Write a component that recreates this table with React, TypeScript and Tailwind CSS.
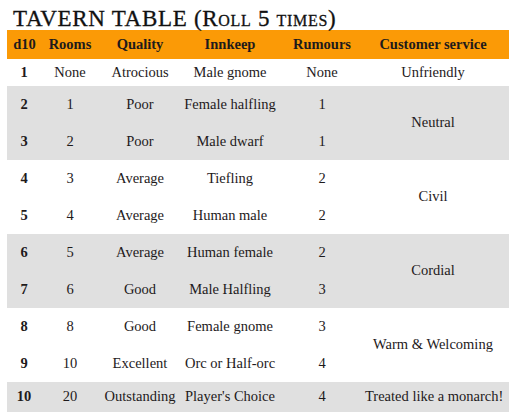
import React from "react";

type Row = { d: string; rooms: string; quality: string; innkeep: string; rumours: string };

const rows: Row[] = [
  { d: "1", rooms: "None", quality: "Atrocious", innkeep: "Male gnome", rumours: "None" },
  { d: "2", rooms: "1", quality: "Poor", innkeep: "Female halfling", rumours: "1" },
  { d: "3", rooms: "2", quality: "Poor", innkeep: "Male dwarf", rumours: "1" },
  { d: "4", rooms: "3", quality: "Average", innkeep: "Tiefling", rumours: "2" },
  { d: "5", rooms: "4", quality: "Average", innkeep: "Human male", rumours: "2" },
  { d: "6", rooms: "5", quality: "Average", innkeep: "Human female", rumours: "2" },
  { d: "7", rooms: "6", quality: "Good", innkeep: "Male Halfling", rumours: "3" },
  { d: "8", rooms: "8", quality: "Good", innkeep: "Female gnome", rumours: "3" },
  { d: "9", rooms: "10", quality: "Excellent", innkeep: "Orc or Half-orc", rumours: "4" },
  { d: "10", rooms: "20", quality: "Outstanding", innkeep: "Player's Choice", rumours: "4" },
];

const service: Record<number, { text: string; span: number }> = {
  0: { text: "Unfriendly", span: 1 },
  1: { text: "Neutral", span: 2 },
  3: { text: "Civil", span: 2 },
  5: { text: "Cordial", span: 2 },
  7: { text: "Warm & Welcoming", span: 2 },
  9: { text: "Treated like a monarch!", span: 1 },
};

function rowBg(i: number) {
  if (i === 0) return "bg-white";
  if (i === 9) return "bg-[#e0e0e0]";
  const block = Math.floor((i - 1) / 2);
  return block % 2 === 0 ? "bg-[#e0e0e0]" : "bg-white";
}

function rowH(i: number) {
  if (i === 0) return "h-[27px]";
  if (i === 9) return "h-[30px]";
  return "h-[37px]";
}

const cell = "p-0 font-['Liberation_Serif',serif] text-[14.5px] text-[#1e1a1b]";

export default function App() {
  return (
    <div className="w-[516px] h-[420px] bg-white text-[#1e1a1b] pt-[7px] px-[7px] font-['Liberation_Serif',serif]">
      <div className="pl-[6px] h-[23px] text-[23px] leading-[23px] tracking-[0.7px] [font-variant:small-caps] text-[#111] [-webkit-text-stroke:0.3px_#111]">
        TAVERN TABLE (Roll 5 times)
      </div>
      <table className="w-[502px] table-fixed border-collapse text-center font-['Liberation_Serif',serif] text-[14.5px]">
        <colgroup>
          <col className="w-[34px]" />
          <col className="w-[58px]" />
          <col className="w-[82px]" />
          <col className="w-[98px]" />
          <col className="w-[86px]" />
          <col className="w-[144px]" />
        </colgroup>
        <thead>
          <tr className="h-[29px] bg-[#fb9a06]">
            <th className={`${cell} font-bold pl-[1px]`}>d10</th>
            <th className={`${cell} font-bold`}>Rooms</th>
            <th className={`${cell} font-bold`}>Quality</th>
            <th className={`${cell} font-bold`}>Innkeep</th>
            <th className={`${cell} font-bold`}>Rumours</th>
            <th className={`${cell} font-bold pr-[8px] whitespace-nowrap`}>Customer service</th>
          </tr>
        </thead>
        <tbody>
          {rows.map((r, i) => (
            <tr key={i} className={`${rowBg(i)} ${rowH(i)}`}>
              <td className={`${cell} font-bold`}>{r.d}</td>
              <td className={cell}>{r.rooms}</td>
              <td className={cell}>{r.quality}</td>
              <td className={`${cell} whitespace-nowrap`}>{r.innkeep}</td>
              <td className={cell}>{r.rumours}</td>
              {service[i] && (
                <td rowSpan={service[i].span} className={`${cell} pr-[8px] whitespace-nowrap ${rowBg(i)}`}>
                  {service[i].text}
                </td>
              )}
            </tr>
          ))}
        </tbody>
      </table>
    </div>
  );
}
